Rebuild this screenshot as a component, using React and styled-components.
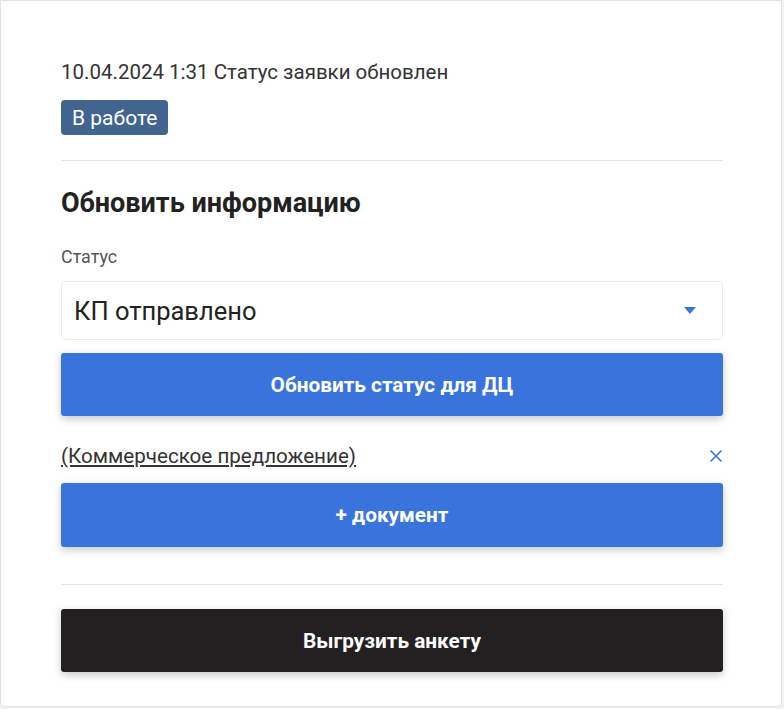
import React from "react";
import styled, { createGlobalStyle } from "styled-components";

const Global = createGlobalStyle`
  html, body { margin: 0; padding: 0; background: #f2f2f2; }
  body { font-family: Roboto, "Noto Sans", sans-serif; }
  * { box-sizing: border-box; }
`;

const Card = styled.div`
  width: 782px;
  height: 707px;
  background: #fff;
  border: 1px solid #e3e3e3;
  border-radius: 0 0 4px 4px;
  padding: 59px 58px 0 60px;
  display: flex;
  flex-direction: column;
`;

const Meta = styled.div`
  font-size: 20.5px;
  line-height: 24px;
  color: #333;
`;

const Badge = styled.span`
  align-self: flex-start;
  margin-top: 16px;
  height: 35px;
  padding: 0 11px;
  display: inline-flex;
  align-items: center;
  background: #41658f;
  color: #fff;
  font-size: 21px;
  border-radius: 4px;
`;

const Divider = styled.hr`
  margin: ${(p) => p.$mt}px 0 0;
  border: none;
  height: 1px;
  background: #e3e3e3;
  width: 100%;
`;

const Heading = styled.h2`
  margin: 27px 0 0;
  font-size: 27px;
  line-height: 30px;
  font-weight: 700;
  color: #222;
`;

const Label = styled.div`
  margin-top: 29px;
  font-size: 17.9px;
  line-height: 20px;
  color: #555;
`;

const Select = styled.div`
  margin-top: 14px;
  height: 59px;
  border: 1px solid #ececec;
  border-radius: 4px;
  display: flex;
  align-items: center;
  justify-content: space-between;
  padding: 0 26px 0 12px;
  font-size: 25.5px;
  color: #222;
`;

const Caret = styled.span`
  width: 0;
  height: 0;
  border-left: 6px solid transparent;
  border-right: 6px solid transparent;
  border-top: 7px solid #3a72d8;
`;

const Button = styled.button`
  margin-top: ${(p) => p.$mt}px;
  height: ${(p) => p.$h || 63}px;
  width: 100%;
  border: none;
  border-radius: 3px;
  background: ${(p) => (p.$dark ? "#222021" : "#3874dc")};
  color: #fff;
  font-family: Roboto, "Noto Sans", sans-serif;
  font-size: 20.8px;
  font-weight: 700;
  box-shadow: 0 3px 8px rgba(0, 0, 0, 0.22);
  cursor: pointer;
`;

const DocRow = styled.div`
  margin-top: 28px;
  display: flex;
  align-items: center;
  justify-content: space-between;
  height: 24px;
`;

const DocLink = styled.a`
  font-size: 20.6px;
  line-height: 24px;
  color: #333;
  text-decoration: underline;
  text-underline-offset: 2px;
`;

const Close = styled.span`
  display: flex;
  color: #3a72d8;
`;

export default function App() {
  return (
    <>
      <Global />
      <Card>
        <Meta>10.04.2024 1:31 Статус заявки обновлен</Meta>
        <Badge>В работе</Badge>
        <Divider $mt={25} />
        <Heading>Обновить информацию</Heading>
        <Label>Статус</Label>
        <Select>
          <span>КП отправлено</span>
          <Caret />
        </Select>
        <Button $mt={13}>Обновить статус для ДЦ</Button>
        <DocRow>
          <DocLink>(Коммерческое предложение)</DocLink>
          <Close>
            <svg width="14" height="14" viewBox="0 0 14 14">
              <path d="M1.5 1.5L12.5 12.5M12.5 1.5L1.5 12.5" stroke="currentColor" strokeWidth="1.5" fill="none" />
            </svg>
          </Close>
        </DocRow>
        <Button $mt={15} $h={64}>+ документ</Button>
        <Divider $mt={37} />
        <Button $mt={24} $dark>Выгрузить анкету</Button>
      </Card>
    </>
  );
}
